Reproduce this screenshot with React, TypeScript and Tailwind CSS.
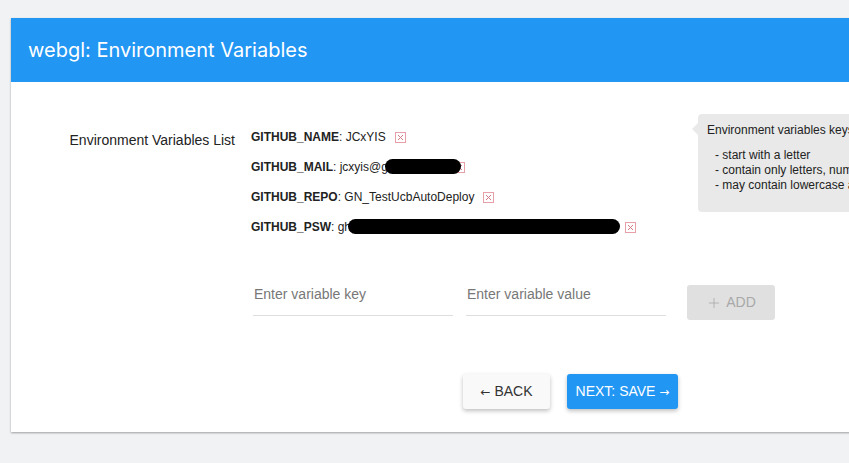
import { Plus } from 'lucide-react'

const vars = [
  { key: 'GITHUB_NAME', value: 'JCxYIS', mask: 0, gap: 9 },
  { key: 'GITHUB_MAIL', value: 'jcxyis@g', mask: 76, gap: -7 },
  { key: 'GITHUB_REPO', value: 'GN_TestUcbAutoDeploy', mask: 0, gap: 9 },
  { key: 'GITHUB_PSW', value: 'gh', mask: 272, gap: 5 },
]

function DeleteIcon() {
  return (
    <span className="inline-flex items-center justify-center w-[11px] h-[11px] border border-[#e8a0a8] text-[#d47a86] shrink-0">
      <svg width="7" height="7" viewBox="0 0 7 7">
        <path d="M1 1L6 6M6 1L1 6" stroke="currentColor" strokeWidth="1" />
      </svg>
    </span>
  )
}

export default function App() {
  return (
    <div className="min-h-[463px] bg-[#f1f2f4] pt-[18px] pl-[11px] overflow-hidden font-['Liberation_Sans',Arial,sans-serif]">
      <div className="bg-white w-[900px] shadow-[0_1px_2px_rgba(0,0,0,0.35)]">
        <div className="h-16 bg-[#2196f3] flex items-center pl-[17px]">
          <h1 className="text-white text-[20px] font-['Inter',sans-serif]">webgl: Environment Variables</h1>
        </div>
        <div className="pt-[45px] pb-[23px]">
          <div className="flex relative">
            <div className="w-[240px] text-right text-[14px] text-[#222] pt-[3px] pr-[16px]">Environment Variables List</div>
            <div className="flex flex-col gap-[13px] text-[12px] text-[#222] pt-[1px]">
              {vars.map(v => (
                <div key={v.key} className="flex items-center h-[17px]">
                  <span className="font-bold">{v.key}</span>
                  <span>:&nbsp;{v.value}</span>
                  {v.mask > 0 ? (
                    <span className="relative z-10 h-[15px] bg-black rounded-full -ml-[3px]" style={{ width: v.mask }} />
                  ) : null}
                  <span style={{ marginLeft: v.gap }}>
                    <DeleteIcon />
                  </span>
                </div>
              ))}
            </div>
            <div className="absolute left-[687px] top-[-13px]">
              <div className="absolute left-[-6px] top-[9px] w-0 h-0 border-y-[6px] border-y-transparent border-r-[6px] border-r-[#e9e9e9]" />
              <div className="bg-[#e9e9e9] rounded-[4px] w-[200px] h-[98px] pl-[9px] pt-[9px] text-[12px] text-[#222] leading-[15px] whitespace-nowrap">
                <div>Environment variables keys:</div>
                <div className="mt-[10px] pl-[8px]">
                  <div>- start with a letter</div>
                  <div>- contain only letters, numbers and underscores</div>
                  <div>- may contain lowercase and uppercase letters</div>
                </div>
              </div>
            </div>
          </div>

          <div className="flex items-center mt-[40px] pl-[242px]">
            <div className="w-[200px] border-b border-[#dedede] h-[36px] flex items-center pl-[1px] pb-[6px]">
              <span className="text-[14px] text-[#777]">Enter variable key</span>
            </div>
            <div className="w-[200px] border-b border-[#dedede] h-[36px] flex items-center pl-[1px] ml-[13px] pb-[6px]">
              <span className="text-[14px] text-[#777]">Enter variable value</span>
            </div>
            <button className="ml-[21px] w-[88px] h-[35px] bg-[#e0e0e0] rounded-[3px] flex items-center justify-center gap-[4px] text-[14px] text-[#a8a8a8] mt-[10px]">
              <Plus size={16} strokeWidth={1.2} />
              ADD
            </button>
          </div>

          <div className="flex mt-[54px] pl-[452px] gap-[17px]">
            <button className="w-[87px] h-[35px] bg-[#f9f9f9] rounded-[3px] shadow-[0_2px_4px_rgba(0,0,0,0.25)] text-[14px] text-[#333]">
              <span className="font-['DejaVu_Sans',sans-serif] text-[12px]">←</span> BACK
            </button>
            <button className="w-[111px] h-[35px] bg-[#2196f3] rounded-[3px] shadow-[0_2px_4px_rgba(0,0,0,0.25)] text-[14px] text-white">
              NEXT: SAVE <span className="font-['DejaVu_Sans',sans-serif] text-[12px]">→</span>
            </button>
          </div>
        </div>
      </div>
    </div>
  )
}
